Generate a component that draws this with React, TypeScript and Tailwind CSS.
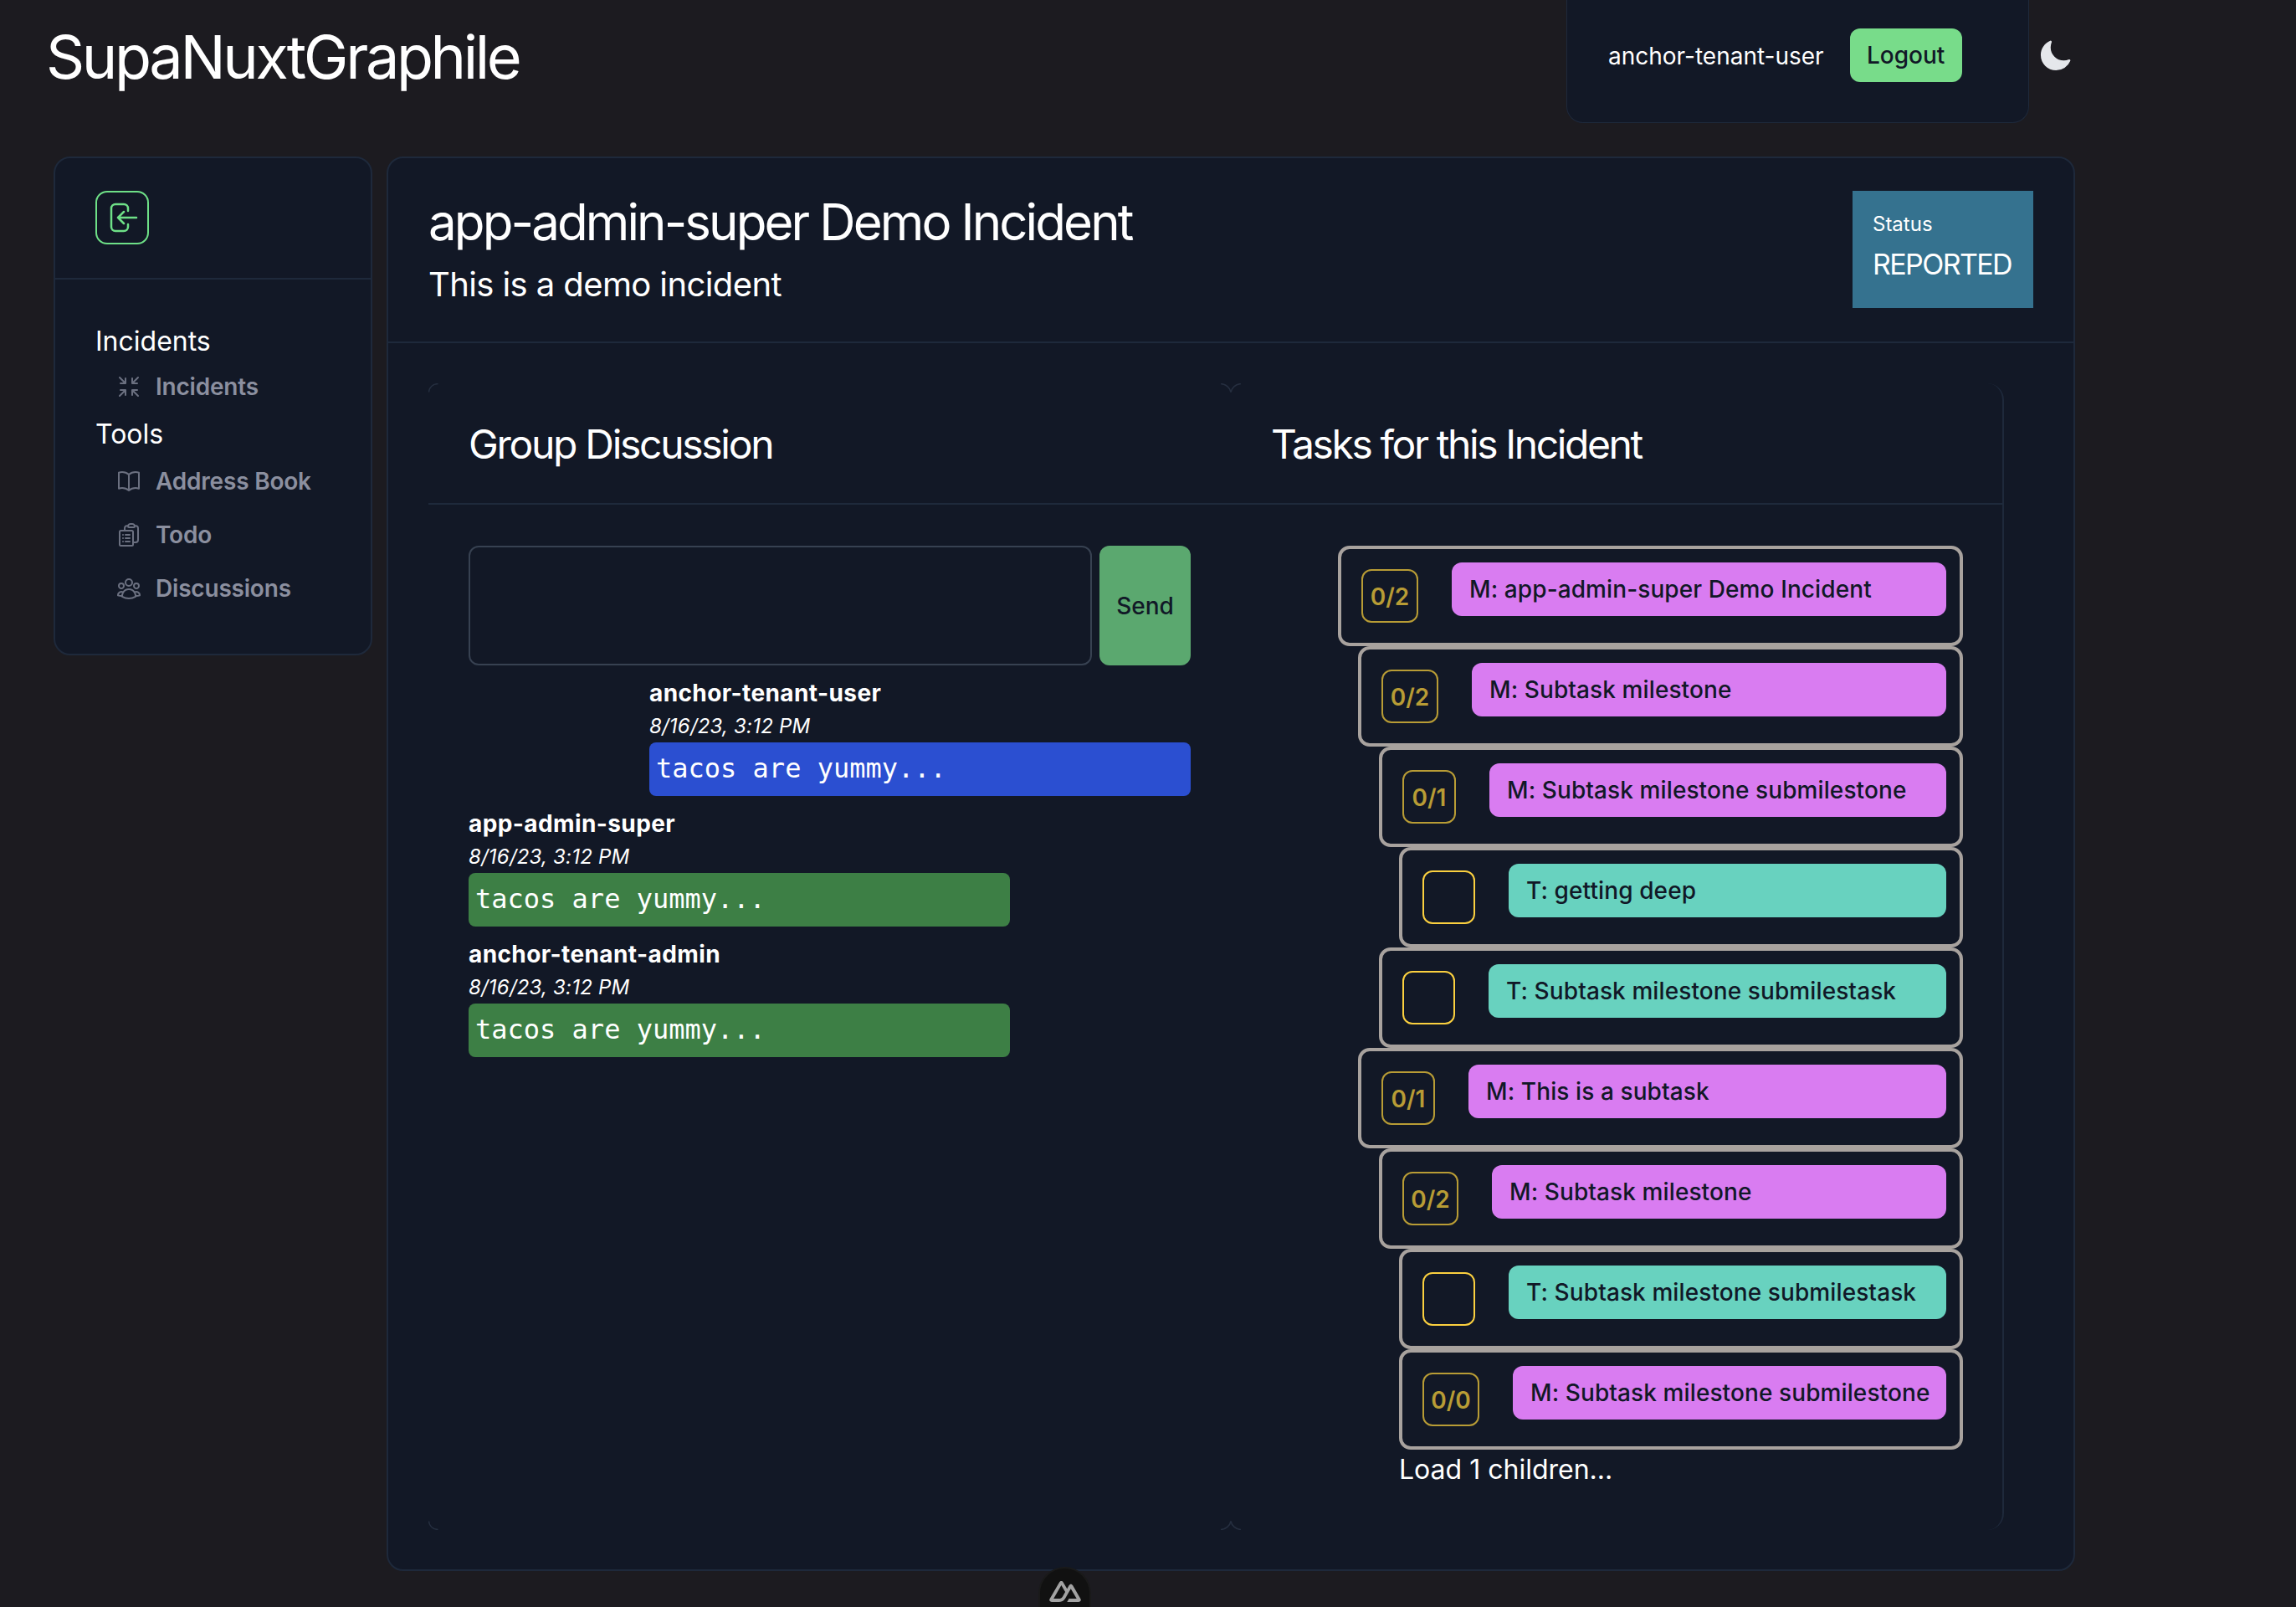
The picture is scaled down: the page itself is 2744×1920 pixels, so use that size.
import React from "react";
import { HiMoon, HiOutlineArrowsPointingIn, HiOutlineBookOpen, HiOutlineClipboardDocumentList, HiOutlineUserGroup } from "react-icons/hi2";

function NavItem({ icon, label, cls }: { icon: React.ReactNode; label: string; cls: string }) {
  return (
    <div className={`flex items-center pl-[24px] text-[28px] leading-[40px] font-semibold tracking-[-0.2px] text-[#8b8f9f] ${cls}`}>
      <span className="w-[48px] flex items-center text-[#6b7080]">{icon}</span>
      {label}
    </div>
  );
}

function Msg({ name, mine }: { name: string; mine?: boolean }) {
  return (
    <div className={`w-[647px] ${mine ? "self-end" : "self-start"}`}>
      <div className="text-[28px] leading-[40px] font-bold tracking-[0.4px] text-white">{name}</div>
      <div className="text-[24px] leading-[39px] italic tracking-[0.2px] text-white">8/16/23, 3:12 PM</div>
      <div className={`h-[64px] rounded-[8px] px-[8px] text-[32px] leading-[63px] text-white font-['DejaVu_Sans_Mono',monospace] ${mine ? "bg-[#2b4fd1]" : "bg-[#3d7f45]"}`}>
        tacos are yummy...
      </div>
    </div>
  );
}

type Row = { indent: string; kind: "M" | "T"; label: string; count?: string; boxW: string };

const rows: Row[] = [
  { indent: "ml-[0px]", kind: "M", label: "M: app-admin-super Demo Incident", count: "0/2", boxW: "w-[68px]" },
  { indent: "ml-[24px]", kind: "M", label: "M: Subtask milestone", count: "0/2", boxW: "w-[68px]" },
  { indent: "ml-[49px]", kind: "M", label: "M: Subtask milestone submilestone", count: "0/1", boxW: "w-[64px]" },
  { indent: "ml-[73px]", kind: "T", label: "T: getting deep", boxW: "w-[63px]" },
  { indent: "ml-[49px]", kind: "T", label: "T: Subtask milestone submilestask", boxW: "w-[63px]" },
  { indent: "ml-[24px]", kind: "M", label: "M: This is a subtask", count: "0/1", boxW: "w-[64px]" },
  { indent: "ml-[49px]", kind: "M", label: "M: Subtask milestone", count: "0/2", boxW: "w-[67px]" },
  { indent: "ml-[73px]", kind: "T", label: "T: Subtask milestone submilestask", boxW: "w-[63px]" },
  { indent: "ml-[73px]", kind: "M", label: "M: Subtask milestone submilestone", count: "0/0", boxW: "w-[68px]" },
];

function TreeRow({ r }: { r: Row }) {
  return (
    <div className={`h-[120px] flex items-start border-[4px] border-[#a8a29e] rounded-[14px] pl-[24px] pr-[16px] ${r.indent}`}>
      <div
        className={`${r.boxW} h-[64px] mt-[24px] shrink-0 rounded-[12px] border-2 flex items-center justify-center text-[28px] font-semibold ${
          r.count ? "border-[#b89c35] text-[#b89c35]" : "border-[#fbd03f]"
        }`}
      >
        <span className="mt-[2px]">{r.count}</span>
      </div>
      <div
        className={`ml-[40px] mt-[16px] flex-1 h-[64px] rounded-[12px] pl-[21px] flex items-center text-[28px] font-medium tracking-[0.1px] text-[#111827] ${
          r.kind === "M" ? "bg-[#d97cf1]" : "bg-[#68d2bf]"
        }`}
      >
        {r.label}
      </div>
    </div>
  );
}

function Arc({ cls, d, w, h }: { cls: string; d: string; w: number; h: number }) {
  return (
    <svg className={`absolute ${cls}`} width={w} height={h} viewBox={`0 0 ${w} ${h}`} fill="none" stroke="#262f40" strokeWidth="1.500">
      <path d={d} />
    </svg>
  );
}

export default function App() {
  return (
    <div className="relative w-[2744px] h-[1920px] overflow-hidden bg-[#1c1b20] text-white font-['Inter',sans-serif]">
      {/* header */}
      <header className="flex items-start h-[187px]">
        <h1 className="ml-[55px] mt-[24px] text-[72px] leading-[88px] font-normal tracking-[-3.4px]">SupaNuxtGraphile</h1>
        <div className="ml-auto w-[553px] h-[147px] bg-[#121826] border border-t-0 border-[#1e293b] rounded-b-[20px] flex items-start pl-[49px]">
          <span className="mt-[45px] text-[28px] leading-[44px]">anchor-tenant-user</span>
          <button className="ml-[31px] mt-[34px] w-[134px] h-[64px] rounded-[12px] bg-[#78dc8a] text-[#111827] text-[28px] font-medium">Logout</button>
        </div>
        <HiMoon className="ml-[7px] mr-[264px] mt-[46px] w-[48px] h-[42px] text-[#e5e7eb] shrink-0" />
      </header>

      <main className="flex items-start ml-[64px] gap-[17px]">
        {/* sidebar */}
        <aside className="w-[381px] h-[596px] shrink-0 bg-[#121826] border-2 border-[#1e293b] rounded-[20px]">
          <div className="h-[145px] border-b-2 border-[#1e293b] pl-[48px] pt-[39px]">
            <div className="w-[64px] h-[64px] rounded-[14px] border-2 border-[#6ee087] flex items-center justify-center">
              <svg width="36" height="36" viewBox="0 0 36 36" fill="none" stroke="#6ee087" strokeWidth="2.500" strokeLinecap="round" strokeLinejoin="round" className="ml-[4px] shrink-0">
                <path d="M23 10V7a5 5 0 0 0-5-5H8a5 5 0 0 0-5 5v22a5 5 0 0 0 5 5h10a5 5 0 0 0 5-5v-3" />
                <path d="M33 18H11M18 11l-7 7 7 7" />
              </svg>
            </div>
          </div>
          <nav className="pl-[48px] pt-[52px]">
            <div className="text-[32px] leading-[44px]">Incidents</div>
            <NavItem cls="mt-[12px]" label="Incidents" icon={<HiOutlineArrowsPointingIn className="w-[32px] h-[32px]" />} />
            <div className="text-[32px] leading-[44px] mt-[15px]">Tools</div>
            <NavItem cls="mt-[14px]" label="Address Book" icon={<HiOutlineBookOpen className="w-[32px] h-[32px]" />} />
            <NavItem cls="mt-[24px]" label="Todo" icon={<HiOutlineClipboardDocumentList className="w-[32px] h-[32px]" />} />
            <NavItem cls="mt-[24px]" label="Discussions" icon={<HiOutlineUserGroup className="w-[32px] h-[32px]" />} />
          </nav>
        </aside>

        {/* main panel */}
        <section className="w-[2018px] h-[1690px] shrink-0 bg-[#121826] border-2 border-[#1e293b] rounded-[20px]">
          <div className="h-[221px] border-b-2 border-[#1e293b] flex items-start pl-[48px] pr-[48px]">
            <div className="pt-[40px]">
              <h2 className="text-[60px] leading-[72px] tracking-[-2.9px]">app-admin-super Demo Incident</h2>
              <p className="text-[40px] leading-[56px] mt-[11px] tracking-[-0.6px]">This is a demo incident</p>
            </div>
            <div className="ml-auto mt-[39px] w-[216px] h-[140px] bg-[#35728f] px-[24px] pt-[24px]">
              <div className="text-[24px] leading-[32px]">Status</div>
              <div className="text-[34px] leading-[48px] mt-[8px] tracking-[-1.6px]">REPORTED</div>
            </div>
          </div>

          {/* card */}
          <div className="mt-[48px] mx-[48px] w-[1883px] h-[1370px] relative border-r-2 border-[#1e293b] rounded-r-[20px]">
            <Arc cls="left-0 top-0" w={12} h={11} d="M0.500 10.500C1 5 5 1 11.500 0.500" />
            <Arc cls="left-[947px] top-0" w={24} h={11} d="M0 0.500C6 1 11 5 12 10.500C13 5 18 1 24 0.500" />
            <Arc cls="left-0 bottom-0" w={12} h={11} d="M0.500 0.500C1 6 5 10 11.500 10.500" />
            <Arc cls="left-[947px] bottom-0" w={24} h={11} d="M0 10.500C6 10 11 6 12 0.500C13 6 18 10 24 10.500" />
            <div className="flex h-[145px] border-b-2 border-[#1e293b] items-center pt-[3px]">
              <div className="w-[1007px] pl-[48px] text-[48px] leading-[64px] tracking-[-2.3px]">Group Discussion</div>
              <div className="text-[48px] leading-[64px] tracking-[-2.4px]">Tasks for this Incident</div>
            </div>
            <div className="flex pt-[49px]">
              <div className="w-[959px] shrink-0 pl-[48px] pr-[48px] flex flex-col gap-[13px]">
                <div className="flex gap-[9px] h-[143px]">
                  <div className="flex-1 border-2 border-[#374151] rounded-[12px]" />
                  <button className="w-[109px] rounded-[12px] bg-[#5ba86f] text-[#111827] text-[28px] font-medium">Send</button>
                </div>
                <Msg name="anchor-tenant-user" mine />
                <Msg name="app-admin-super" />
                <Msg name="anchor-tenant-admin" />
              </div>
              <div className="w-[747px] ml-[128px] shrink-0">
                {rows.map((r, i) => (
                  <TreeRow key={i} r={r} />
                ))}
                <div className="ml-[73px] mt-[2px] text-[32px] leading-[44px]">Load 1 children...</div>
              </div>
            </div>
          </div>
        </section>
      </main>

      {/* nuxt devtools */}
      <div className="absolute left-[1241px] top-[1872px] w-[63px] h-[48px] bg-[#111111] border-2 border-b-0 border-[#1a1a1a] rounded-t-full flex items-start justify-center pt-[15px]">
        <svg width="38" height="25" viewBox="43 115 425 283" fill="#a3a3a3" className="shrink-0">
          <path d="M281.44 397.667H438.32C443.326 397.667 448.118 395.908 452.453 393.427C456.789 390.946 461.258 387.831 463.76 383.533C466.262 379.236 467.6 374.36 467.6 369.399C467.6 364.437 466.266 359.563 463.76 355.268L357.76 172.947C355.258 168.65 352.201 165.534 347.867 163.053C343.532 160.573 337.325 158.813 332.32 158.813C327.315 158.813 322.521 160.573 318.187 163.053C313.852 165.534 310.795 168.65 308.293 172.947L281.44 219.587L227.733 129.13C225.229 124.834 222.176 120.307 217.84 117.827C213.504 115.346 208.713 115 203.707 115C198.701 115 193.909 115.346 189.573 117.827C185.238 120.307 180.771 124.834 178.267 129.13L46.8267 355.268C44.3208 359.563 43.0013 364.437 43 369.399C42.9987 374.36 44.3133 379.235 46.8133 383.533C49.3133 387.83 53.7797 390.946 58.1133 393.427C62.447 395.908 67.2393 397.667 72.2437 397.667H171.2C210.412 397.667 238.732 380.685 258.6 346.933L306.827 263.2L332.32 219.587L410.56 353.027H306.827L281.44 397.667ZM168.267 353.027H98.8L203.707 172.947L256.48 263.2L221.547 323.962C208.222 345.828 193.02 353.027 168.267 353.027Z" />
        </svg>
      </div>
    </div>
  );
}
